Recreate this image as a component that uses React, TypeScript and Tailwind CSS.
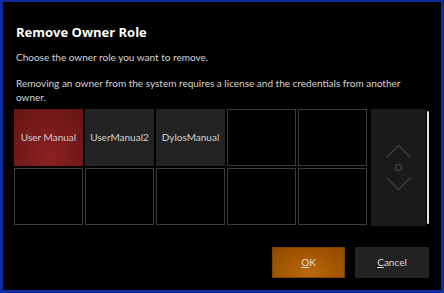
import React from 'react';

const roles = ['User Manual', 'UserManual2', 'DylosManual'];
const TOTAL_SLOTS = 10;

const ScrollPad: React.FC = () => (
  <div className="w-[55px] h-[117px] bg-[#1a1a1a] flex items-center justify-center">
    <svg width="25" height="47" viewBox="0 0 25 47" fill="none" stroke="#3d3d3d" strokeWidth="1.4">
      <path d="M1 13 L12.5 1.5 L24 13" />
      <circle cx="12.5" cy="23.5" r="3" />
      <path d="M1 34 L12.5 45.5 L24 34" />
    </svg>
  </div>
);

export default function App() {
  const slots = Array.from({ length: TOTAL_SLOTS }, (_, i) => roles[i]);

  return (
    <div
      className="w-[444px] h-[293px] bg-black border-[#0c2d9c] border-x-[3px] border-b-[3px] border-t-2 flex flex-col pl-[13px] pr-[12px] pt-[22px] text-[#d6d6d6]"
      style={{ fontFamily: 'Lato, "Open Sans", sans-serif' }}
    >
      <h1
        className="text-[13px] leading-[16px] font-bold text-white"
        style={{ fontFamily: '"Open Sans", sans-serif' }}
      >
        Remove Owner Role
      </h1>
      <p className="mt-[10px] text-[10px] leading-[14px]">Choose the owner role you want to remove.</p>
      <p className="mt-[12px] text-[10px] leading-[14px] pr-[14px]">
        Removing an owner from the system requires a license and the credentials from another owner.
      </p>

      {/* role tiles + scroller */}
      <div className="mt-[5px] -ml-[2px] flex items-start">
        <div className="grid grid-cols-[repeat(5,69px)] grid-rows-[repeat(2,57px)] gap-[2px]">
          {slots.map((name, idx) =>
            name ? (
              <div
                key={idx}
                className={
                  idx === 0
                    ? 'flex items-center justify-center text-[10px] text-[#d8c8c8] bg-[radial-gradient(ellipse_at_50%_85%,#8c2121_0%,#761a1a_55%,#661414_100%)]'
                    : 'flex items-center justify-center text-[10px] text-[#d0d0d0] bg-[#232323]'
                }
              >
                {name}
              </div>
            ) : (
              <div key={idx} className="border border-[#3c3c3c] bg-black" />
            )
          )}
        </div>
        <div className="ml-[4px]">
          <ScrollPad />
        </div>
        <div className="ml-[1px] mt-[2px] w-[3px] h-[113px] rounded-sm bg-[#e6e6e6]" />
      </div>

      {/* actions */}
      <div className="mt-[21px] flex justify-end gap-[10px]">
        <button className="w-[73px] h-[31px] text-[10px] text-[#e8e0d8] border border-[#7a4200] bg-[radial-gradient(ellipse_at_50%_90%,#bb6a0e_0%,#a35700_55%,#8f4a00_100%)]">
          <span className="underline">O</span>K
        </button>
        <button className="w-[74px] h-[31px] text-[10px] text-[#dcdcdc] bg-[#222222]">
          <span className="underline">C</span>ancel
        </button>
      </div>
    </div>
  );
}
